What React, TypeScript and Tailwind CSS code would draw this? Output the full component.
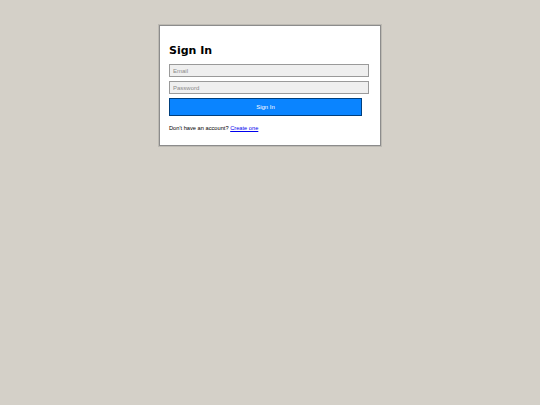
import React from 'react';

export default function App() {
  return (
    <div className="min-h-[405px] w-full bg-[#d4d0c8] pt-[25px]">
      <div className="mx-auto w-[222px] border border-[#8c8c8c] bg-white px-[9px] pb-[13px] pt-[18px] shadow-[0_0_0_1px_#bdbab3]">
        <h1 className="mb-[6px] font-['DejaVu_Sans',sans-serif] text-[11px] font-bold leading-[14px] text-black">Sign In</h1>
        <form className="flex flex-col" onSubmit={(e) => e.preventDefault()}>
          <input
            type="email"
            placeholder="Email"
            className="mb-[4px] h-[13px] w-[200px] border border-[#9a9a9a] bg-[#efefef] px-[3px] font-['Liberation_Sans',sans-serif] text-[6px] text-black placeholder:text-[#8a8a8a] outline-none"
          />
          <input
            type="password"
            placeholder="Password"
            className="mb-[4px] h-[13px] w-[200px] border border-[#9a9a9a] bg-[#efefef] px-[3px] font-['Liberation_Sans',sans-serif] text-[6px] text-black placeholder:text-[#8a8a8a] outline-none"
          />
          <button
            type="submit"
            className="h-[18px] w-[193px] border border-[#003f7d] bg-[#0a84ff] font-['Liberation_Sans',sans-serif] text-[6px] text-white"
          >
            Sign In
          </button>
        </form>
        <p className="mt-[8px] font-['Liberation_Sans',sans-serif] text-[5.7px] leading-[8px] text-black">
          Don't have an account?{' '}
          <a href="#" className="text-[#0000ee] underline">
            Create one
          </a>
        </p>
      </div>
    </div>
  );
}
